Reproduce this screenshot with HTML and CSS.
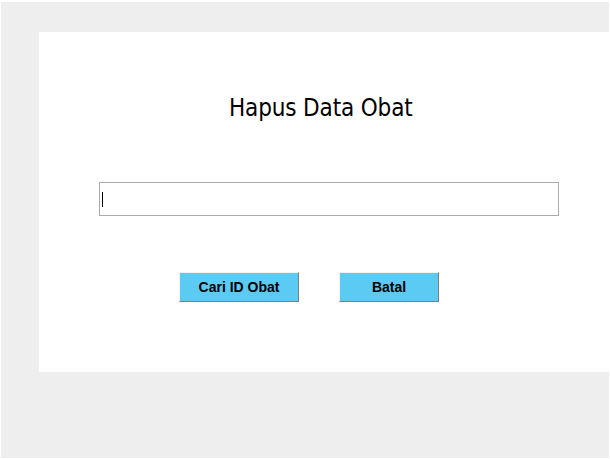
FILE: index.html
```html
<!DOCTYPE html>
<html>
<head>
<meta charset="utf-8">
<link rel="stylesheet" href="styles.css">
</head>
<body>
<div class="frame">
  <div class="panel">
    <h1 class="title">Hapus Data Obat</h1>
    <div class="field"><span class="caret"></span></div>
    <div class="actions">
      <button class="btn btn-search">Cari ID Obat</button>
      <button class="btn btn-cancel">Batal</button>
    </div>
  </div>
</div>
</body>
</html>
```
FILE: styles.css
```css
html, body {
  margin: 0;
  padding: 0;
  background: #ffffff;
}
body {
  width: 610px;
  height: 459px;
  box-sizing: border-box;
  padding: 2px 1px 1px 1px;
  overflow: hidden;
}
.frame {
  background: #eeeeee;
  height: 456px;
  padding-top: 30px;
  padding-left: 38px;
  box-sizing: border-box;
}
.panel {
  background: #ffffff;
  height: 340px;
  margin-right: -1px;
  display: flex;
  flex-direction: column;
  padding-top: 61px;
  box-sizing: border-box;
}
.title {
  margin: 0;
  font-family: "DejaVu Sans Condensed", "DejaVu Sans", sans-serif;
  font-weight: normal;
  font-size: 24px;
  line-height: 30px;
  letter-spacing: -0.15px;
  color: #000;
  padding-left: 190px;
}
.field {
  margin-top: 59px;
  margin-left: 60px;
  width: 460px;
  height: 34px;
  box-sizing: border-box;
  border: 1px solid #ababab;
  display: flex;
  align-items: center;
  padding-left: 2px;
}
.caret {
  width: 1px;
  height: 15px;
  background: #000;
}
.actions {
  margin-top: 56px;
  padding-left: 140px;
  display: flex;
  gap: 40px;
}
.btn {
  height: 30px;
  box-sizing: border-box;
  background: #5bcbf3;
  border-style: solid;
  border-width: 1px;
  border-color: #f2f2f2 #7d7d7d #7d7d7d #f2f2f2;
  font-family: "Liberation Sans", Arial, sans-serif;
  font-weight: bold;
  font-size: 14px;
  color: #000;
  padding: 0;
}
.btn-search { width: 120px; }
.btn-cancel { width: 100px; }
```
